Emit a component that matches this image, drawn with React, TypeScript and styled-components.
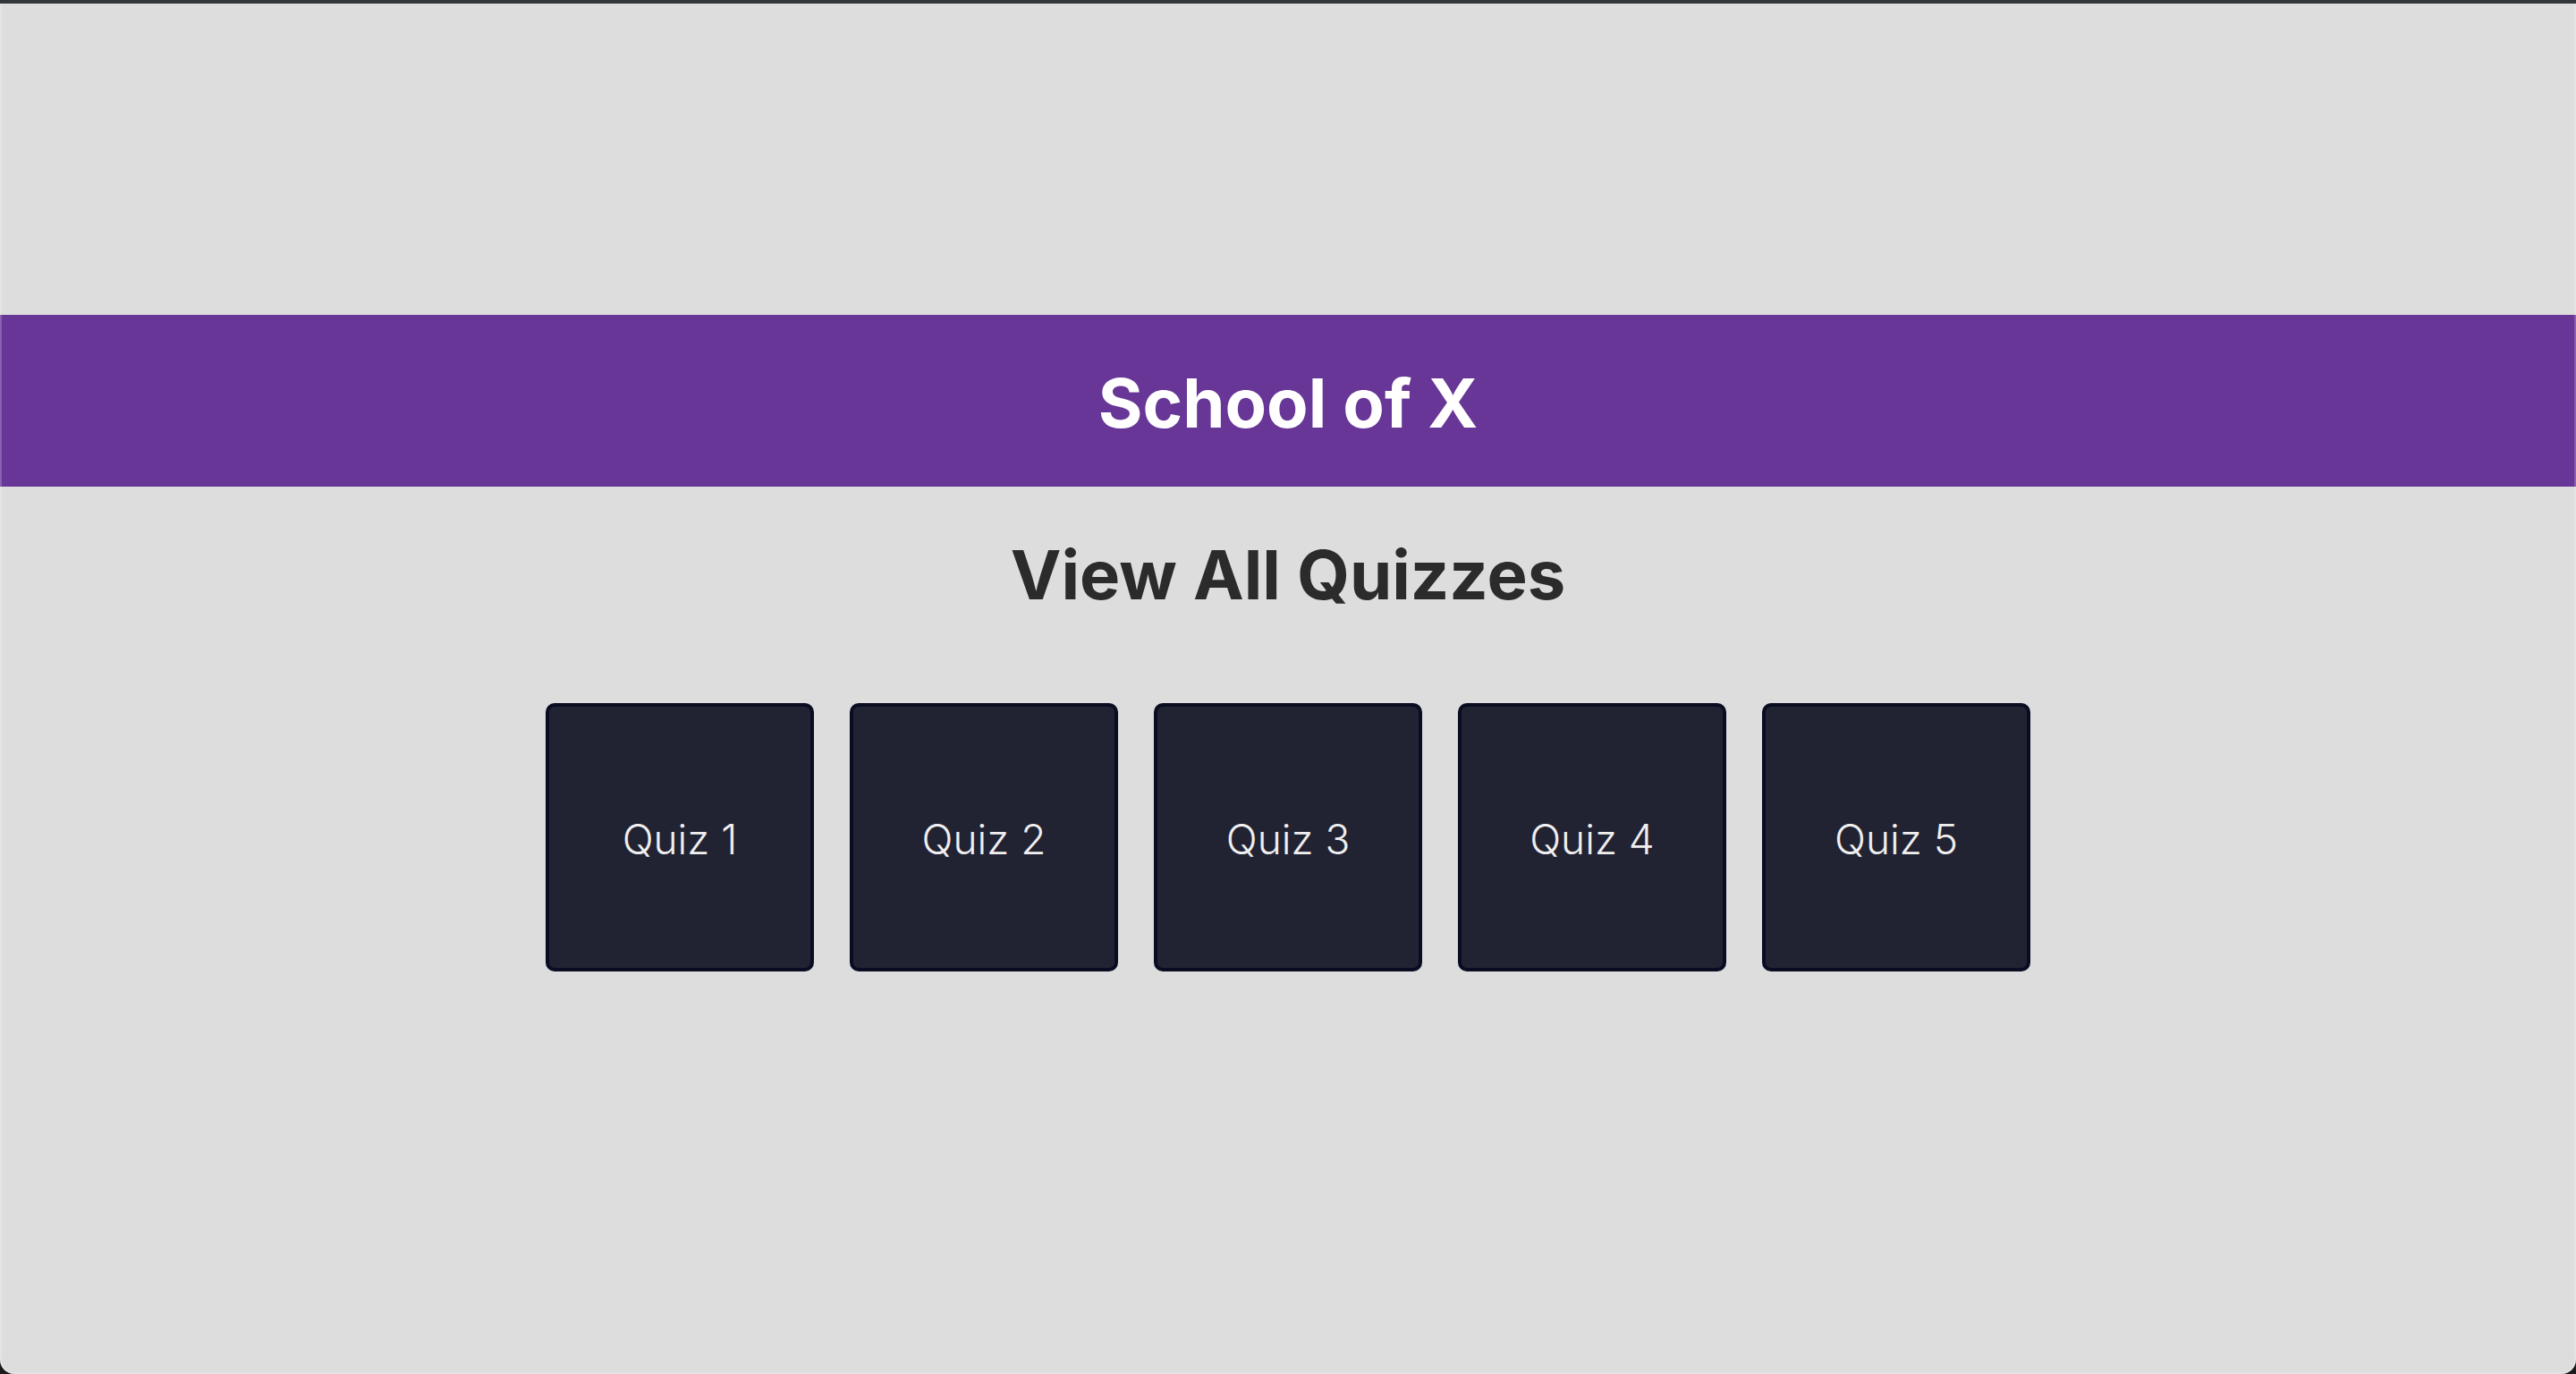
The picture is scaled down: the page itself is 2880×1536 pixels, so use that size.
import React from "react";
import styled, { createGlobalStyle } from "styled-components";

const GlobalStyle = createGlobalStyle`
  * { box-sizing: border-box; }
  html { background: #1b1b1b; }
  body { margin: 0; }
`;

const Page = styled.main`
  position: relative;
  min-height: 100vh;
  padding: 348px 0 80px;
  border-top: 4px solid #33373a;
  border-radius: 0 0 16px 16px;
  background: #dddddd;
  font-family: Inter, "Liberation Sans", sans-serif;

  /* light rim along the window's edge */
  &::after {
    content: "";
    position: absolute;
    inset: 0;
    border: 2px solid rgba(255, 255, 255, 0.22);
    border-top: 0;
    border-radius: 0 0 16px 16px;
    pointer-events: none;
  }
`;

const Banner = styled.header`
  display: flex;
  align-items: center;
  justify-content: center;
  height: 192px;
  padding-top: 4px;
  background: #673696;
`;

const Title = styled.h1<{ $color: string }>`
  margin: 0;
  color: ${(p) => p.$color};
  font-size: 76px;
  line-height: 96px;
  font-weight: 700;
  text-align: center;
`;

const Content = styled.section`
  display: flex;
  flex-direction: column;
  align-items: center;
  gap: 96px;
  padding-top: 50px;
`;

const QuizList = styled.nav`
  display: flex;
  flex-wrap: wrap;
  justify-content: center;
  gap: 40px;
`;

const QuizCard = styled.button`
  width: 300px;
  height: 300px;
  padding: 4px 0 0;
  border: 4px solid #0a0c22;
  border-radius: 10px;
  background: #212333;
  color: #f0eeee;
  font: 300 46px/60px Inter, "Liberation Sans", sans-serif;
  cursor: pointer;
`;

const quizzes = [1, 2, 3, 4, 5];

export default function App() {
  return (
    <>
      <GlobalStyle />
      <Page>
        <Banner>
          <Title $color="#ffffff">School of X</Title>
        </Banner>
        <Content>
          <Title as="h2" $color="#2b2b2b">View All Quizzes</Title>
          <QuizList>
            {quizzes.map((n) => (
              <QuizCard key={n} type="button">Quiz {n}</QuizCard>
            ))}
          </QuizList>
        </Content>
      </Page>
    </>
  );
}
